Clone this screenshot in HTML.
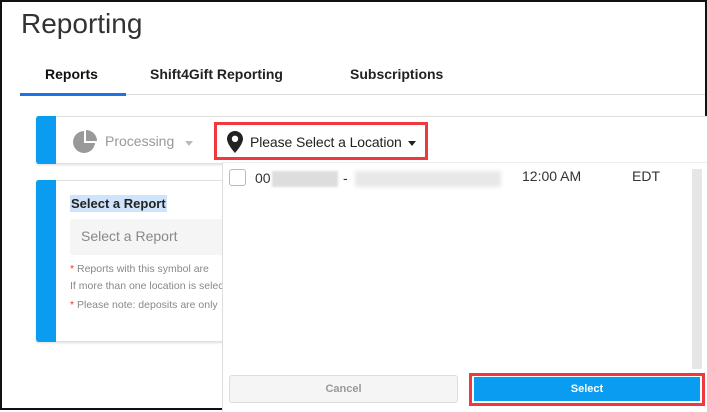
<!DOCTYPE html>
<html><head><style>
*{box-sizing:border-box;margin:0;padding:0}
body{width:707px;height:410px;overflow:hidden;background:#fff;font-family:"Liberation Sans",sans-serif;position:relative;border:2px solid #111}
.a{position:absolute}
</style></head><body>
<div class="a" style="left:19px;top:6px;font-size:28px;color:#333">Reporting</div>
<div class="a" style="left:43px;top:64px;font-size:14px;font-weight:bold;color:#111">Reports</div>
<div class="a" style="left:148px;top:64px;font-size:14px;font-weight:bold;color:#222">Shift4Gift Reporting</div>
<div class="a" style="left:348px;top:64px;font-size:14px;font-weight:bold;color:#222">Subscriptions</div>
<div class="a" style="left:18px;top:92px;width:685px;height:1px;background:#ddd"></div>
<div class="a" style="left:18px;top:91px;width:106px;height:3px;background:#1a73e8"></div>

<div class="a" style="left:34px;top:114px;width:680px;height:48px;background:#fff;border:1px solid #e2e2e2;border-left:none;box-shadow:0 1px 2px #ddd"></div>
<div class="a" style="left:34px;top:114px;width:20px;height:48px;background:#0a9cf0;border-radius:3px 0 0 3px"></div>
<svg class="a" style="left:71px;top:128px" width="24" height="24" viewBox="0 0 24 24"><path d="M11 1A11 11 0 1 0 22 13H11Z" fill="#999"/><path d="M13 0A11 11 0 0 1 24 11H13Z" fill="#999"/><path d="M13 13H22A10 10 0 0 1 18 20Z" fill="#999"/></svg>
<div class="a" style="left:103px;top:131px;font-size:14px;color:#999">Processing</div>
<div class="a" style="left:183px;top:139px;border:4px solid transparent;border-top:5px solid #bbb"></div>
<div class="a" style="left:212px;top:120px;width:214px;height:38px;border:3px solid #ee3a3f"></div>
<svg class="a" style="left:225px;top:129px" width="16" height="22" viewBox="0 0 16 22"><path d="M8 0C3.6 0 0 3.5 0 7.8 0 13.5 8 22 8 22s8-8.5 8-14.2C16 3.5 12.4 0 8 0zm0 11a3.2 3.2 0 1 1 0-6.4A3.2 3.2 0 0 1 8 11z" fill="#222"/></svg>
<div class="a" style="left:248px;top:132px;font-size:14px;color:#222;letter-spacing:-0.1px">Please Select a Location</div>
<div class="a" style="left:406px;top:139px;border:4px solid transparent;border-top:5px solid #222"></div>

<div class="a" style="left:34px;top:178px;width:200px;height:162px;background:#fff;border:1px solid #e2e2e2;box-shadow:0 1px 2px #ddd"></div>
<div class="a" style="left:34px;top:178px;width:20px;height:162px;background:#0a9cf0;border-radius:3px 0 0 3px"></div>
<div class="a" style="left:68px;top:193px;font-size:13px;font-weight:bold;color:#222;background:#cfe3fb;padding:1px 1px">Select a Report</div>
<div class="a" style="left:68px;top:217px;width:160px;height:36px;background:#f5f5f5;border-radius:3px"></div>
<div class="a" style="left:79px;top:226px;font-size:14px;color:#888">Select a Report</div>
<div class="a" style="left:68px;top:259px;font-size:10.5px;color:#888;line-height:17px;white-space:nowrap;width:152px;overflow:hidden"><span style="color:#e33">*</span> Reports with this symbol are<br>If more than one location is selected</div>
<div class="a" style="left:68px;top:297px;font-size:10.5px;color:#888;white-space:nowrap;width:152px;overflow:hidden"><span style="color:#e33">*</span> Please note: deposits are only</div>

<div class="a" style="left:220px;top:160px;width:485px;height:250px;background:#fff;border-left:1px solid #ddd;border-top:1px solid #eee"></div>
<div class="a" style="left:227px;top:167px;width:17px;height:17px;border:1px solid #bbb;border-radius:3px;background:#fff"></div>
<div class="a" style="left:253px;top:168px;font-size:14px;color:#333">00</div>
<div class="a" style="left:270px;top:169px;width:66px;height:16px;background:#ddd;filter:blur(1px)"></div>
<div class="a" style="left:341px;top:168px;font-size:14px;color:#333">-</div>
<div class="a" style="left:353px;top:169px;width:146px;height:16px;background:#e8e8e8;filter:blur(2px)"></div>
<div class="a" style="left:520px;top:166px;font-size:14px;color:#333">12:00 AM</div>
<div class="a" style="left:630px;top:166px;font-size:14px;color:#333">EDT</div>
<div class="a" style="left:690px;top:167px;width:10px;height:200px;background:#e6e6e6"></div>
<div class="a" style="left:227px;top:373px;width:229px;height:28px;background:#f5f5f5;border:1px solid #ddd;border-radius:3px;font-size:11px;font-weight:bold;color:#999;text-align:center;line-height:26px">Cancel</div>
<div class="a" style="left:467px;top:371px;width:236px;height:33px;border:3px solid #ee3a3f;background:#fff"></div>
<div class="a" style="left:472px;top:375px;width:226px;height:24px;background:#0a9cf0;font-size:11px;font-weight:bold;color:#fff;text-align:center;line-height:24px">Select</div>
</body></html>
